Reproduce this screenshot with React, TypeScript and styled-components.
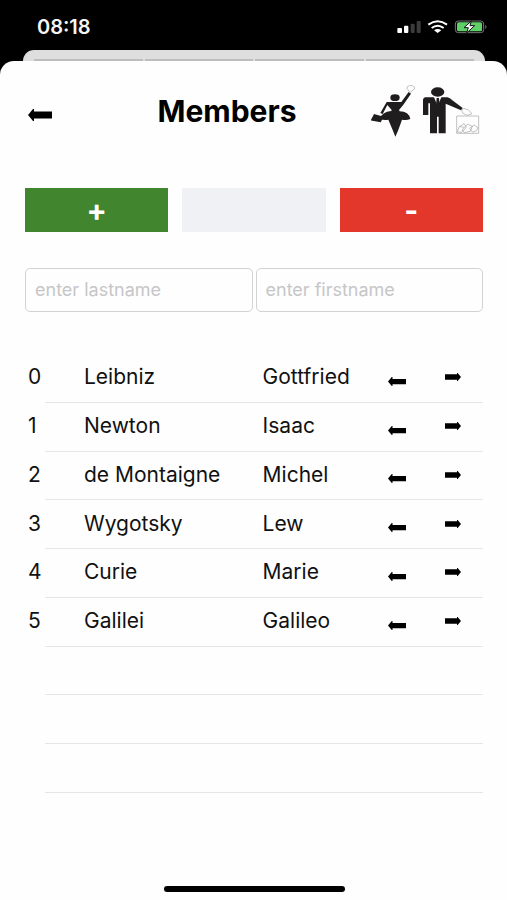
import React, { useState } from "react";
import styled, { createGlobalStyle } from "styled-components";

const GlobalStyle = createGlobalStyle`
  *, *::before, *::after { box-sizing: border-box; }
  body {
    margin: 0;
    background: #000;
    color: #111;
    font-family: Inter, "Liberation Sans", sans-serif;
  }
  button, input { font: inherit; }
`;

const Screen = styled.div`
  display: flex;
  flex-direction: column;
  min-height: 100vh;
`;

const StatusBar = styled.header`
  display: flex;
  align-items: center;
  justify-content: space-between;
  height: 50px;
  padding: 4px 19px 0 37px;
  color: #f5f5f5;
`;

const Clock = styled.time`
  font-size: 20px;
  font-weight: 600;
  line-height: 24px;
`;

const StatusIcons = styled.div`
  display: flex;
`;

const BackSheet = styled.div`
  display: flex;
  align-items: flex-end;
  gap: 2px;
  height: 11px;
  margin: 0 22px 0 23px;
  padding: 0 11px;
  border-radius: 11px 11px 0 0;
  background: #dedede;
`;

const BackSheetTab = styled.div`
  flex: 1;
  height: 2px;
  background: #bdbdbd;
`;

const Sheet = styled.main`
  display: flex;
  flex: 1;
  flex-direction: column;
  padding: 20px 24px 8px 25px;
  border-radius: 14px 14px 0 0;
  background: #fefefe;
`;

const TitleBar = styled.div`
  display: grid;
  grid-template-columns: 112px 1fr 112px;
  align-items: center;
  height: 60px;
`;

const BackArea = styled.div`
  display: flex;
  padding: 8px 0 0 3px;
`;

const Title = styled.h1`
  margin: 0;
  padding-right: 54px;
  color: #000;
  font-size: 30px;
  font-weight: 700;
  line-height: 36px;
  white-space: nowrap;
  justify-self: center;
`;

const IconButton = styled.button<{ $low?: boolean }>`
  display: flex;
  padding: ${(p) => (p.$low ? "8px 0 0" : "0")};
  border: 0;
  background: none;
  color: #000;
  cursor: pointer;
`;

const Actions = styled.div`
  display: grid;
  grid-template-columns: repeat(3, 1fr);
  gap: 14px;
  margin-top: 47px;
`;

const ActionButton = styled.button<{ $color: string }>`
  height: 44px;
  padding: 0;
  border: 0;
  background: ${(p) => p.$color};
  color: #fff;
  font-size: 30px;
  font-weight: 700;
  line-height: 44px;
  cursor: pointer;
`;

const Fields = styled.form`
  display: grid;
  grid-template-columns: 1fr 1fr;
  gap: 3px;
  margin-top: 36px;
`;

const Field = styled.input`
  width: 100%;
  height: 44px;
  padding: 0 9px 2px;
  border: 1px solid #d2d2d3;
  border-radius: 5px;
  background: #fefefe;
  color: #111;
  font-size: 18px;
  outline: 0;

  &::placeholder { color: #c6c6c8; opacity: 1; }
`;

const Table = styled.table`
  width: 100%;
  height: 439px;
  margin-top: 42px;
  border-collapse: collapse;
  table-layout: fixed;
`;

const Column = styled.col<{ $width?: string }>`
  width: ${(p) => p.$width ?? "auto"};
`;

const Row = styled.tr`
  height: 48px;
  background: linear-gradient(#e6e6e7, #e6e6e7) right bottom / calc(100% - 20px) 1px no-repeat;
`;

const Cell = styled.td<{ $inset?: boolean }>`
  padding: 0 0 2px ${(p) => (p.$inset ? "3px" : "0")};
  font-size: 21px;
  line-height: 24px;
  white-space: nowrap;
`;

const HomeIndicator = styled.div`
  width: 181px;
  height: 6px;
  margin: auto auto 0;
  border-radius: 3px;
  background: #000;
`;

function Arrow({ width, height, right }: { width: number; height: number; right?: boolean }) {
  const d = right
    ? "M0 2H18V0H19L24 6L19 12H18V10H0Z"
    : "M24 2.5V9.5H6V12H5L0 6L5 0H6V2.5Z";
  return (
    <svg width={width} height={height} viewBox="0 0 24 12" preserveAspectRatio="none" aria-hidden="true">
      <path d={d} fill="currentColor" />
    </svg>
  );
}

function StatusGlyphs() {
  return (
    <svg width="91" height="14" viewBox="0 0 273 42" role="img" aria-label="Signal, Wi-Fi, battery charging">
      <g fill="#fff">
        <rect x="1" y="24" width="14" height="15" rx="3" />
        <rect x="21" y="17" width="13" height="22" rx="3" />
      </g>
      <g fill="#3b3b3b">
        <rect x="41" y="11" width="12" height="28" rx="3" />
        <rect x="59" y="3" width="12" height="36" rx="3" />
      </g>
      <g fill="none" stroke="#fff" strokeWidth="6">
        <path d="M94 14Q122-6 150 14" />
        <path d="M104 24Q122 10 140 24" />
      </g>
      <path d="M111 31Q122 23 133 31L122 39Z" fill="#fff" />
      <rect x="175" y="3" width="85" height="35" rx="9" fill="none" stroke="#777" strokeWidth="3" />
      <rect x="180" y="7" width="75" height="27" rx="5" fill="#5fd068" />
      <path d="M265 14Q272 20 265 27Z" fill="#777" />
      <path d="M223 3L201 23H214L209 39L233 17H219Z" fill="#fff" stroke="#111" strokeWidth="3" />
    </svg>
  );
}

function PeopleLogo() {
  return (
    <svg width="109" height="52" viewBox="33 27 327 156" role="img" aria-label="Members casting votes">
      <g fill="#1f1d1d">
        <ellipse cx="105" cy="65" rx="14" ry="10" />
        <path d="M80 78H124L146 48L153 53L129 88L117 102L119 106Q147 107 151 129Q140 134 126 131L114 164L106 182L98 162L85 131Q71 134 60 128Q65 108 94 105L95 102L82 87L68 114L61 111Z" />
        <path d="M42 114L71 122L62 139L32 133Z" />
        <ellipse cx="233" cy="48" rx="20" ry="14" />
        <path d="M197 64H222L233 90L244 64H262Q270 65 277 73L308 96L303 103L257 83V172H236V122H231V172H210V82H205V117H189V73Q189 65 197 64Z" />
        <path d="M230 66H237L239 88L233 94L228 88Z" />
      </g>
      <g fill="none" stroke="#a3a3a3" strokeWidth="2">
        <path d="M147 46L141 37Q140 30 149 29Q158 26 164 34Q166 40 158 42L152 49Z" />
        <path d="M305 103L312 97L325 102L336 113L322 118L309 112Z" />
        <path d="M290 120H356V172H290Z" />
        <path d="M292 168L297 153L312 143L319 153L306 169ZM306 162L323 144L337 151L331 166L313 170ZM329 157L342 147L354 155L349 164L338 169ZM297 151L312 154" />
      </g>
    </svg>
  );
}

const members = [
  ["Leibniz", "Gottfried"],
  ["Newton", "Isaac"],
  ["de Montaigne", "Michel"],
  ["Wygotsky", "Lew"],
  ["Curie", "Marie"],
  ["Galilei", "Galileo"],
];

const emptyRows = [6, 7, 8];

export default function App() {
  const [lastname, setLastname] = useState("");
  const [firstname, setFirstname] = useState("");

  return (
    <>
      <GlobalStyle />
      <Screen>
        <StatusBar>
          <Clock>08:18</Clock>
          <StatusIcons>
            <StatusGlyphs />
          </StatusIcons>
        </StatusBar>
        <BackSheet>
          <BackSheetTab />
          <BackSheetTab />
          <BackSheetTab />
          <BackSheetTab />
        </BackSheet>
        <Sheet>
          <TitleBar>
            <BackArea>
              <IconButton type="button" aria-label="Back">
                <Arrow width={24} height={12} />
              </IconButton>
            </BackArea>
            <Title>Members</Title>
            <PeopleLogo />
          </TitleBar>
          <Actions>
            <ActionButton type="button" $color="#41862e">+</ActionButton>
            <ActionButton type="button" $color="#eff1f5" aria-label="Clear" />
            <ActionButton type="button" $color="#e3372b">-</ActionButton>
          </Actions>
          <Fields>
            <Field
              aria-label="Last name"
              placeholder="enter lastname"
              value={lastname}
              onChange={(e) => setLastname(e.target.value)}
            />
            <Field
              aria-label="First name"
              placeholder="enter firstname"
              value={firstname}
              onChange={(e) => setFirstname(e.target.value)}
            />
          </Fields>
          <Table>
            <colgroup>
              <Column $width="59px" />
              <Column $width="39%" />
              <Column />
              <Column $width="57px" />
              <Column $width="38px" />
            </colgroup>
            <tbody>
              {members.map(([last, first], index) => (
                <Row key={last}>
                  <Cell $inset>{index}</Cell>
                  <Cell>{last}</Cell>
                  <Cell>{first}</Cell>
                  <Cell>
                    <IconButton type="button" aria-label={`Move ${last} left`} $low>
                      <Arrow width={18} height={9} />
                    </IconButton>
                  </Cell>
                  <Cell>
                    <IconButton type="button" aria-label={`Move ${last} right`}>
                      <Arrow width={16} height={8} right />
                    </IconButton>
                  </Cell>
                </Row>
              ))}
              {emptyRows.map((row) => (
                <Row key={row}>
                  <Cell colSpan={5} />
                </Row>
              ))}
            </tbody>
          </Table>
          <HomeIndicator />
        </Sheet>
      </Screen>
    </>
  );
}
